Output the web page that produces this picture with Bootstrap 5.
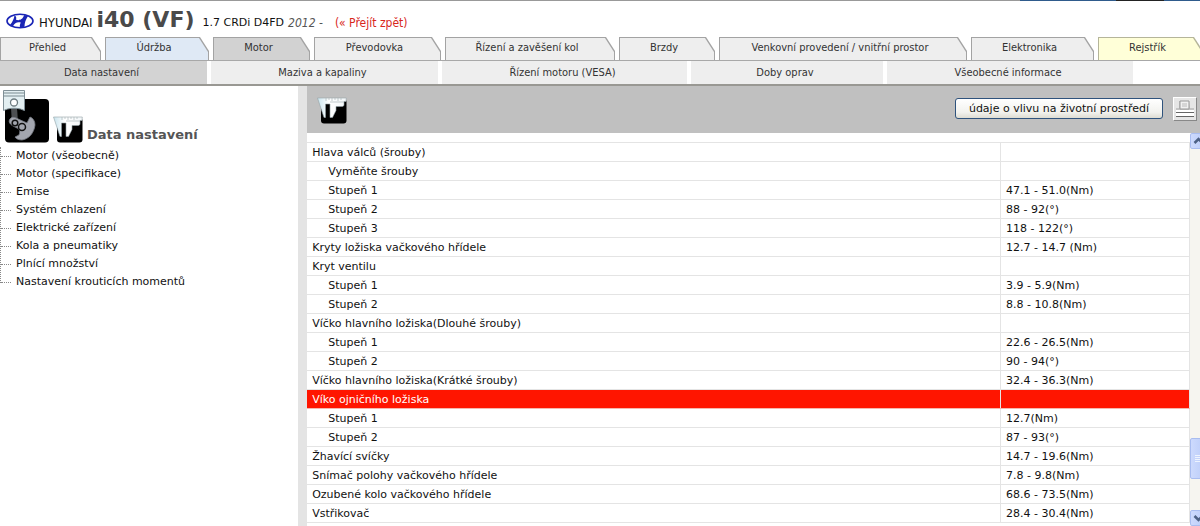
<!DOCTYPE html>
<html lang="cs">
<head>
<meta charset="utf-8">
<meta name="viewport" content="width=device-width, initial-scale=1">
<title>HYUNDAI i40 (VF) – Data nastavení</title>
<link href="https://cdn.jsdelivr.net/npm/bootstrap@5.3.0/dist/css/bootstrap.min.css" rel="stylesheet">
<style>
  :root { --wide: "DejaVu Sans", sans-serif; --narrow: "DejaVu Sans Condensed", "DejaVu Sans", sans-serif; }
  body { font: 11px/18px var(--wide); color: #111; }
  a { color: inherit; text-decoration: none; }
  .topline { height: 1px; background: linear-gradient(90deg, #999 85%, #2f5b8c 85%, #2f5b8c 93%, #222 93%, #222 97%, #2f5b8c 97%); }
  .vehicle { height: 36px; padding: 0 6px 4px 5px; font-family: var(--narrow); font-size: 12px; line-height: 20px; }
  .vehicle .make { font-size: 13px; }
  .vehicle h1 { font: bold 22px/26px var(--wide); color: #4a4a4a; }
  .vehicle .engine { font: 11px/20px var(--wide); }
  .vehicle .year { color: #555; }
  .vehicle .back { color: #d8271c; }
  .tabs { gap: 4px; border-bottom: 1px solid #a8a8a8; margin-right: -3px; }
  .tab { --face: #eee; --edge: #a3a3a3; position: relative; height: 23px; padding-right: 6px; font: 11px/22px var(--narrow); color: #333; text-align: center; white-space: nowrap; background: var(--edge); clip-path: polygon(0 0, calc(100% - 9px) 0, 100% 14px, 100% 100%, 0 100%); isolation: isolate; }
  .tab::before { content: ""; position: absolute; z-index: -1; inset: 1px 1px 0 1px; background: var(--face); clip-path: polygon(0 0, calc(100% - 9px) 0, 100% 14px, 100% 100%, 0 100%); }
  .tab.service { --face: #dfe9f5; }
  .tab.current { --face: #d2d2d2; }
  .tab.register { --face: #ffffd8; --edge: #b5b59a; }
  .subtabs { gap: 4px; border-bottom: 2px solid #999893; padding-right: 67px; }
  .subtab { height: 23px; padding-right: 4px; font: 11px/23px var(--narrow); color: #333; text-align: center; white-space: nowrap; background: #eee; }
  .subtab.current { background: #d3d3d3; }
  .side { width: 24.85%; }
  .side .heading { height: 58px; padding: 4px 4px 1px 3px; gap: 4px; }
  .side h2 { font: bold 13px/16px var(--wide); color: #555; }
  .tree { border-left: 1px dotted #888; margin: 3px 0 0; height: 136px; }
  .tree li { height: 18px; }
  .tree li::before { content: ""; width: 10px; border-top: 1px dotted #888; margin-right: 5px; }
  .content { border-left: 9px solid #e4e4e4; }
  .tools { height: 47px; gap: 10px; background: #c0c0c0; padding: 0 3px 2px 10px; }
  .env { height: 21px; padding: 0 13px; font: 11px/17px var(--wide); color: #111; border: 1px solid #2f537d; border-radius: 3px; background: linear-gradient(#fff, #f2f2ee 70%, #dedcd2); white-space: nowrap; }
  .print { width: 24px; height: 24px; padding: 0; background: #e6e6e6; border: 1px solid; border-color: #fff #888 #888 #fff; }
  .specs { line-height: 17px; }
  .specs td { height: 19px; padding: 1px 5px 0; border-bottom: 1px solid #e4e4e4; border-right: 1px solid #e4e4e4; white-space: nowrap; }
  .specs .blank td { height: 9px; padding: 0; border-right: 0; }
  .specs .value { width: 189px; }
  .specs .step { padding-left: 21px; }
  .specs .picked td { background: #ff1500; color: #fff; border-bottom-color: #f6b6ae; }
  .scroller { width: 10px; background: #f6f5f0; overflow: hidden; }
  .scroller button { width: 17px; padding: 0; border: 1px solid #a9bdf0; border-radius: 2px; background: linear-gradient(90deg, #cddafd, #b9cbf8); flex: none; }
  .scroller .arrow { height: 16px; }
  .scroller .thumb { height: 41px; }
</style>
</head>
<body class="vh-100 overflow-hidden d-flex flex-column bg-white">
<header class="flex-shrink-0">
  <div class="topline"></div>
  <div class="vehicle d-flex align-items-end">
    <svg class="me-1 mb-1" width="30" height="16" viewBox="0 0 28 16" aria-label="Hyundai" role="img">
      <ellipse cx="14" cy="8" rx="13" ry="6.7" fill="#fff" stroke="#1a25b5" stroke-width="1.6"/>
      <path d="M8.500 2.300C10.500 3.500 10.500 5 10 6.800c3 .8 6 .6 8.300-4.800l3.700 1c-2.300 3.500-3.500 7-3.500 10.800l-4.500.9c-.5-2 0-3.700.8-5.200-3.300-.9-6 0-8 4L4 12c2.500-3 4-6 4.500-9.700Z" fill="#1a25b5"/>
    </svg>
    <span class="make">HYUNDAI</span>
    <h1 class="mb-0 ms-1 me-2">i40 (VF)</h1>
    <span class="engine">1.7 CRDi D4FD</span>
    <em class="year ms-1 me-1">2012 -</em>
    <a class="back ms-2" href="#">(« Přejít zpět)</a>
  </div>
  <nav class="tabs d-flex" aria-label="Skupiny">
    <a class="tab" style="flex: 95 1 0" href="#">Přehled</a>
    <a class="tab service" style="flex: 98 1 0" href="#">Údržba</a>
    <a class="tab current" style="flex: 91 1 0" href="#">Motor</a>
    <a class="tab" style="flex: 121 1 0" href="#">Převodovka</a>
    <a class="tab" style="flex: 164 1 0" href="#">Řízení a zavěšení kol</a>
    <a class="tab" style="flex: 90 1 0" href="#">Brzdy</a>
    <a class="tab" style="flex: 242 1 0" href="#">Venkovní provedení / vnitřní prostor</a>
    <a class="tab" style="flex: 117 1 0" href="#">Elektronika</a>
    <a class="tab register" style="flex: 99 1 0" href="#">Rejstřík</a>
  </nav>
  <nav class="subtabs d-flex" aria-label="Motor">
    <a class="subtab current" style="flex: 203 1 0" href="#">Data nastavení</a>
    <a class="subtab" style="flex: 223 1 0" href="#">Maziva a kapaliny</a>
    <a class="subtab" style="flex: 241 1 0" href="#">Řízení motoru (VESA)</a>
    <a class="subtab" style="flex: 188 1 0" href="#">Doby oprav</a>
    <a class="subtab" style="flex: 242 1 0" href="#">Všeobecné informace</a>
  </nav>
</header>
<svg width="0" height="0" class="position-absolute" aria-hidden="true">
  <defs>
    <linearGradient id="steel" x2="1"><stop stop-color="#c9e4ee"/><stop offset=".4" stop-color="#fff"/><stop offset="1" stop-color="#f2f6f8"/></linearGradient>
    <symbol id="caliper" viewBox="0 0 30 27">
      <rect x="4" y="2" width="25.500" height="24.500" rx="3" fill="#000"/>
      <path d="M.5 1H29.300L29 4.500H27V8.500L25.500 9.500H19V13.500L15.500 20.500H13V7H8.500V20.500H7L4.500 13Z" fill="url(#steel)" stroke="#93a1a6" stroke-width=".6"/>
      <path d="M9 1v3M12 1v2M15 1v3M18 1v2M21 1v3M24 1v2M13 5h14" stroke="#a9b4b8" stroke-width=".7"/>
    </symbol>
  </defs>
</svg>
<div class="d-flex flex-grow-1 overflow-hidden">
  <aside class="side flex-shrink-0">
    <div class="heading d-flex align-items-end">
      <svg width="46" height="53" viewBox="0 0 46 53" aria-hidden="true">
        <rect x="2" y="9" width="44" height="43.500" rx="4" fill="#000"/>
        <path d="M8 18h6l1 14-6 3Z" fill="#4d4f52"/>
        <path d="M7 29c1-2 4-2 6-1l11 5 3-6c3 1 5 4 5 8-1 8-6 14-13 15-3 0-6-1-7-3l4-2c1-2 1-5 0-6l-6-3c-3-2-5-4-3-7Z" fill="#a3a6af" stroke="#777b84" stroke-width=".8"/>
        <g fill="none" stroke="#111" stroke-width="1.500"><circle cx="12" cy="33" r="2.800"/><circle cx="19" cy="37" r="3.500"/></g>
        <path d="M.5.5h21v20l-4-1.500c-4-1-9-1-13 0l-4 1.500Z" fill="#e3eff2" stroke="#819198"/>
        <path d="M0 3h21.500M0 6h21.500" stroke="#7b8b91"/>
        <circle cx="11" cy="12.500" r="3.500" fill="#fff" stroke="#6d7b80" stroke-width="1.300"/>
      </svg>
      <svg width="30" height="27" aria-hidden="true"><use href="#caliper"/></svg>
      <h2 class="mb-0">Data nastavení</h2>
    </div>
    <ul class="tree list-unstyled">
      <li class="d-flex align-items-center"><a href="#">Motor (všeobecně)</a></li>
      <li class="d-flex align-items-center"><a href="#">Motor (specifikace)</a></li>
      <li class="d-flex align-items-center"><a href="#">Emise</a></li>
      <li class="d-flex align-items-center"><a href="#">Systém chlazení</a></li>
      <li class="d-flex align-items-center"><a href="#">Elektrické zařízení</a></li>
      <li class="d-flex align-items-center"><a href="#">Kola a pneumatiky</a></li>
      <li class="d-flex align-items-center"><a href="#">Plnící množství</a></li>
      <li class="d-flex align-items-center"><a href="#">Nastavení krouticích momentů</a></li>
    </ul>
  </aside>
  <main class="content flex-grow-1 d-flex flex-column overflow-hidden">
    <div class="tools d-flex align-items-center flex-shrink-0">
      <svg width="30" height="27" class="me-auto mt-1" aria-hidden="true"><use href="#caliper"/></svg>
      <button class="env" type="button">údaje o vlivu na životní prostředí</button>
      <button class="print" type="button" aria-label="Tisk">
        <svg class="d-block" width="22" height="22" viewBox="0 0 22 22" aria-hidden="true">
          <path d="M2 10h3V3h10l1 7h4v8H2Z" fill="#c4c4c4"/><path d="M6 3h9v8H6Z" fill="#f0f0f0" stroke="#999"/><path d="M8 5h5v4H8Z" fill="#d5d5d5"/><path d="M2 12h18v2H2zM2 15h18v3H2z" fill="#fff"/><path d="M2 14.500h18M2 18.500h18" stroke="#666"/>
        </svg>
      </button>
    </div>
    <div class="d-flex flex-grow-1 overflow-hidden">
      <div class="flex-grow-1 overflow-hidden">
        <table class="specs w-100">
          <tbody>
            <tr class="blank"><td></td><td class="value"></td></tr>
            <tr><td>Hlava válců (šrouby)</td><td></td></tr>
            <tr><td class="step">Vyměňte šrouby</td><td></td></tr>
            <tr><td class="step">Stupeň 1</td><td>47.1 - 51.0(Nm)</td></tr>
            <tr><td class="step">Stupeň 2</td><td>88 - 92(°)</td></tr>
            <tr><td class="step">Stupeň 3</td><td>118 - 122(°)</td></tr>
            <tr><td>Kryty ložiska vačkového hřídele</td><td>12.7 - 14.7 (Nm)</td></tr>
            <tr><td>Kryt ventilu</td><td></td></tr>
            <tr><td class="step">Stupeň 1</td><td>3.9 - 5.9(Nm)</td></tr>
            <tr><td class="step">Stupeň 2</td><td>8.8 - 10.8(Nm)</td></tr>
            <tr><td>Víčko hlavního ložiska(Dlouhé šrouby)</td><td></td></tr>
            <tr><td class="step">Stupeň 1</td><td>22.6 - 26.5(Nm)</td></tr>
            <tr><td class="step">Stupeň 2</td><td>90 - 94(°)</td></tr>
            <tr><td>Víčko hlavního ložiska(Krátké šrouby)</td><td>32.4 - 36.3(Nm)</td></tr>
            <tr class="picked"><td>Víko ojničního ložiska</td><td></td></tr>
            <tr><td class="step">Stupeň 1</td><td>12.7(Nm)</td></tr>
            <tr><td class="step">Stupeň 2</td><td>87 - 93(°)</td></tr>
            <tr><td>Žhavící svíčky</td><td>14.7 - 19.6(Nm)</td></tr>
            <tr><td>Snímač polohy vačkového hřídele</td><td>7.8 - 9.8(Nm)</td></tr>
            <tr><td>Ozubené kolo vačkového hřídele</td><td>68.6 - 73.5(Nm)</td></tr>
            <tr><td>Vstřikovač</td><td>28.4 - 30.4(Nm)</td></tr>
            <tr class="blank"><td></td><td></td></tr>
          </tbody>
        </table>
      </div>
      <div class="scroller d-flex flex-column flex-shrink-0">
        <button class="arrow" type="button" aria-label="Nahoru"><svg class="d-block" width="15" height="14" viewBox="0 0 15 14"><path d="M3.500 9 7.500 5l4 4" fill="none" stroke="#4d6185" stroke-width="2.500"/></svg></button>
        <div style="flex: 290 1 0"></div>
        <button class="thumb" type="button" aria-label="Posuvník"><svg class="d-block" width="15" height="39" viewBox="0 0 15 39"><path d="M4 16.500h8M4 18.500h8M4 20.500h8M4 22.500h8" stroke="#eef4fe"/></svg></button>
        <div style="flex: 31 1 0"></div>
        <button class="arrow" type="button" aria-label="Dolů"><svg class="d-block" width="15" height="14" viewBox="0 0 15 14"><path d="m3.500 5 4 4 4-4" fill="none" stroke="#4d6185" stroke-width="2.500"/></svg></button>
      </div>
    </div>
  </main>
</div>
<script src="https://cdn.jsdelivr.net/npm/bootstrap@5.3.0/dist/js/bootstrap.bundle.min.js"></script>
</body>
</html>
